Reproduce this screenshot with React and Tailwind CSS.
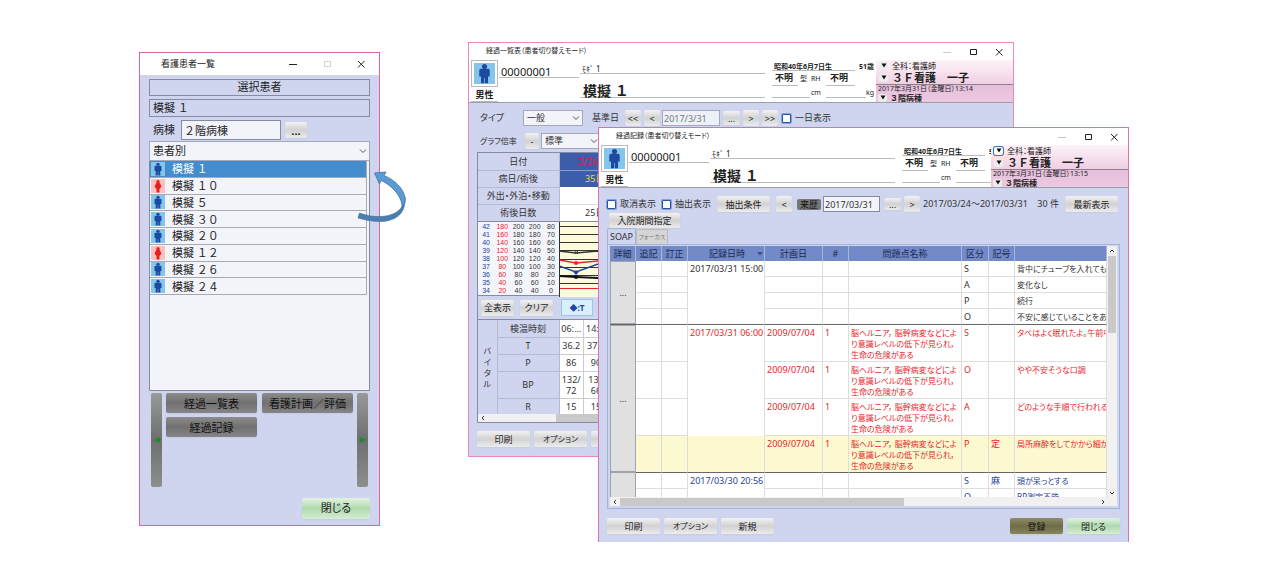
import React, { useState } from 'react';

const patients = [
  { name: '模擬 １', sex: 'm' },
  { name: '模擬 １０', sex: 'f' },
  { name: '模擬 ５', sex: 'm' },
  { name: '模擬 ３０', sex: 'm' },
  { name: '模擬 ２０', sex: 'm' },
  { name: '模擬 １２', sex: 'f' },
  { name: '模擬 ２６', sex: 'm' },
  { name: '模擬 ２４', sex: 'm' }
];

const scale = [
  [42, 180, 200, 200, 80],
  [41, 160, 180, 180, 70],
  [40, 140, 160, 160, 60],
  [39, 120, 140, 140, 50],
  [38, 100, 120, 120, 40],
  [37, 80, 100, 100, 30],
  [36, 60, 80, 80, 20],
  [35, 40, 60, 60, 10],
  [34, 20, 40, 40, 0]
];

const problem = '脳ヘルニア， 脳幹病変などによ\nり意識レベルの低下が見られ，\n生命の危険がある';

const groups = [
  {
    time: '2017/03/31 15:00',
    color: 'text-[#333]',
    rows: [
      { kind: 'S', text: '背中にチューブを入れてもら' },
      { kind: 'A', text: '変化なし' },
      { kind: 'P', text: '続行' },
      { kind: 'O', text: '不安に感じていることをあま' }
    ]
  },
  {
    time: '2017/03/31 06:00',
    color: 'text-[#e8262b]',
    rows: [
      { plan: '2009/07/04', kind: 'S', text: 'タベはよく眠れたよ。午前中' },
      { plan: '2009/07/04', kind: 'O', text: 'やや不安そうな口調' },
      { plan: '2009/07/04', kind: 'A', text: 'どのような手順で行われるの' },
      { plan: '2009/07/04', kind: 'P', mark: '定', text: '局所麻酔をしてかから細か', active: true }
    ]
  },
  {
    time: '2017/03/30 20:56',
    color: 'text-[#2b3f96]',
    rows: [
      { kind: 'S', mark: '麻', text: '頭が呆っとする' },
      { kind: 'O', text: 'BP測定不能' }
    ]
  }
];

const Person = ({ sex = 'm', className }) => (
  <svg viewBox="0 0 24 24" className={className} aria-hidden="true">
    <rect width="24" height="24" fill={sex === 'm' ? '#86c5ea' : '#fbc0c0'} />
    {sex === 'm' ? (
      <g fill="#1c4aa0">
        <circle cx="12" cy="4" r="2.900" />
        <path d="M8 6.500h8q2 0 2 2.200v6.800h-2V23h-3.600v-6h-0.800v6H8v-7.500H6V8.700q0-2.200 2-2.200z" />
      </g>
    ) : (
      <g fill="#e8201c">
        <circle cx="12" cy="4.500" r="3" />
        <path d="M9 7h6l3 6-3.500 4v6h-5v-6L6 13z" />
      </g>
    )}
  </svg>
);

const Btn = ({ className = '', children, ...rest }) => (
  <button
    type="button"
    className={`flex shrink-0 items-center justify-center whitespace-nowrap rounded-xs bg-linear-to-b from-[#f2f2f2] via-[#d2d2d2] to-[#ececec] leading-none text-[#222] shadow-xs ${className}`}
    {...rest}
  >
    {children}
  </button>
);

const Check = ({ id, label }) => (
  <div className="flex shrink-0 items-center gap-1">
    <input
      id={id}
      type="checkbox"
      className="size-[9px] appearance-none rounded-[1px] border border-[#2456a8] bg-white ring-1 ring-[#2456a8]/40 checked:bg-[#2456a8]"
    />
    <label htmlFor={id} className="whitespace-nowrap">{label}</label>
  </div>
);

const Chevron = ({ className }) => (
  <svg viewBox="0 0 8 8" className={className} fill="none" stroke="#555" strokeWidth="1" aria-hidden="true">
    <path d="M1 2.500l3 3 3-3" />
  </svg>
);

const Select = ({ label, value, className }) => (
  <div className={`grid items-center border border-[#a3a8bd] bg-[#f3f3fa] ${className}`}>
    <select aria-label={label} className="col-start-1 row-start-1 h-full w-full appearance-none pl-[3px] outline-none">
      <option>{value}</option>
    </select>
    <Chevron className="pointer-events-none col-start-1 row-start-1 mr-0.5 size-2 justify-self-end" />
  </div>
);

const TitleBar = ({
  title,
  className = 'h-[17px]',
  textClass = 'pl-[17px] text-[7px]',
  controls = 'gap-[18px] pr-2.5',
  dim
}) => (
  <div className={`flex shrink-0 items-center justify-between bg-white ${className}`}>
    <h2 className={`text-[#222] ${textClass}`}>{title}</h2>
    <div className={`flex ${controls}`}>
      <button type="button" aria-label="最小化">
        <svg viewBox="0 0 8 8" className="size-2" stroke={dim === 'min' ? '#c8c8c8' : '#222'}><path d="M0 4.500h8" /></svg>
      </button>
      <button type="button" aria-label="最大化">
        <svg viewBox="0 0 8 8" className="size-2" fill="none" stroke={dim === 'max' ? '#d0d0d0' : '#222'}><path d="M1.500 1.500h6v5h-6z" /></svg>
      </button>
      <button type="button" aria-label="ウィンドウを閉じる">
        <svg viewBox="0 0 8 8" className="size-2" stroke="#222"><path d="M1 1l6.500 6.500M7.500 1L1 7.500" /></svg>
      </button>
    </div>
  </div>
);

const MenuBtn = ({ focus }) => (
  <button
    type="button"
    aria-label="切替"
    className={`flex h-2 w-[9px] shrink-0 items-center justify-center rounded-xs ${focus ? 'bg-white ring-1 ring-[#2878c8]' : 'bg-[#ececec]'}`}
  >
    <svg viewBox="0 0 6 5" className="h-[5px] w-1.5"><path d="M0.500 0.500h5L3 4.500z" fill="#111" /></svg>
  </button>
);

const PatientHeader = ({ time, focus }) => (
  <div className="flex h-[43px] shrink-0 border-b border-[#9a9fae] bg-white text-[#222]">
    <div className="flex min-w-0 flex-1 overflow-hidden pl-0.5">
      <div className="flex w-[27px] shrink-0 flex-col">
        <div className="border border-[#bbb] bg-white p-0.5">
          <Person className="size-[21px]" />
        </div>
        <div className="mt-0.5 border-b border-[#bbb] text-center text-[9px] font-bold leading-3">男性</div>
      </div>
      <div className="ml-px h-[18px] w-20 shrink-0 border-b border-[#bbb] pl-0.5 text-[11px] leading-[23px]">00000001</div>
      <div className="ml-px w-[185px] shrink-0 [font-feature-settings:normal]">
        <div className="h-3.5 border-b border-[#bbb] pl-0.5 text-[8px] leading-[18px]">ﾓｷﾞ 1</div>
        <div className="h-6 border-b border-[#bbb] pl-[3px] text-[14px] font-bold leading-[33px]">模擬 １</div>
      </div>
      <div className="ml-[7px] w-[108px] shrink-0 text-[7px]">
        <div className="flex h-[11px] gap-1 leading-[14px]">
          <span className="w-[83px] whitespace-nowrap border-b border-[#bbb] pl-0.5 font-bold">昭和40年6月7日生</span>
          <span className="whitespace-nowrap font-bold">51歳</span>
        </div>
        <div className="flex h-[15px] items-end leading-[14px]">
          <span className="w-[26px] border-b border-[#bbb] pl-[3px] text-[9px] font-bold">不明</span>
          <span className="w-[13px] pl-0.5">型</span>
          <span className="w-[15px]">RH</span>
          <span className="w-[29px] border-b border-[#bbb] pl-1 text-[9px] font-bold">不明</span>
        </div>
        <div className="flex h-3 items-end leading-[10px]">
          <span className="h-2 w-[38px] border-b border-[#bbb]" />
          <span className="w-4 pl-px">cm</span>
          <span className="h-2 w-[40px] border-b border-[#bbb]" />
          <span>kg</span>
        </div>
      </div>
    </div>
    <div className="flex w-[137px] shrink-0 flex-col whitespace-nowrap">
      <div className="h-[25px] border-b border-[#8d7f8d] bg-linear-to-b from-[#fdf3f8] to-[#f0cfe3] pl-[3px]">
        <div className="flex h-[11px] items-center gap-1 text-[8px] leading-none"><MenuBtn focus={focus} />全科：看護師</div>
        <div className="flex h-[13px] items-center gap-1 text-[11px] font-bold leading-none [font-feature-settings:normal]"><MenuBtn />３Ｆ看護　一子</div>
      </div>
      <div className="flex-1 bg-linear-to-b from-[#e6bfdb] to-[#ecc9e0] pl-0.5">
        <div className="text-[7px] leading-[8px]">2017年3月31日（金曜日）{time}</div>
        <div className="flex h-[9px] items-center gap-[3px] text-[8px] font-bold leading-none [font-feature-settings:normal]"><MenuBtn />３階病棟</div>
      </div>
    </div>
  </div>
);

const PatientList = () => {
  const [selected, setSelected] = useState(0);

  return (
    <section className="absolute left-[139px] top-[52px] flex h-[474px] w-[241px] flex-col border border-[#e05fa8] bg-[#cfd5ee] [font-feature-settings:normal]">
      <TitleBar title="看護患者一覧" className="h-[22px]" textClass="pl-[21px] text-[9px]" controls="gap-[26px] pr-3.5" dim="max" />
      <div className="flex flex-1 flex-col px-[9px] pt-1 text-[11px] text-[#222]">
        <div className="flex h-[17px] items-center justify-center border border-[#858ba5]">選択患者</div>
        <div className="mt-[3px] flex h-[18px] items-center border border-[#858ba5] pl-[3px]">模擬 １</div>
        <div className="mt-[3px] flex h-5 items-center">
          <label htmlFor="ward" className="w-8 pl-1">病棟</label>
          <input id="ward" defaultValue="２階病棟" className="h-5 w-[100px] border border-[#858ba5] bg-[#f3f3fa] pl-0.5 outline-none" />
          <Btn className="ml-1 h-4 w-[22px] font-bold">...</Btn>
        </div>
        <Select label="表示" value="患者別" className="mt-px h-[20px]" />
        <div className="h-[230px] border border-t-0 border-[#858ba5] bg-[#f3f3fa] pr-0.5">
          <ul className="flex h-[134px] flex-col">
            {patients.map((p, i) => (
              <li key={p.name} className="min-h-0 flex-1">
                <button
                  type="button"
                  onClick={() => setSelected(i)}
                  className={`flex h-full w-full items-center gap-[7px] border-b border-r border-[#a9a9b0] pl-px leading-none ${selected === i ? 'bg-[#448ccb] text-white' : ''}`}
                >
                  <Person sex={p.sex} className="size-3.5" />
                  {p.name}
                </button>
              </li>
            ))}
          </ul>
        </div>
        <div className="mt-0.5 flex h-[94px] justify-between px-0.5">
          <button type="button" aria-label="前へ" className="flex w-[11px] items-center justify-center rounded-xs bg-linear-to-b from-[#999] via-[#6f6f6f] to-[#8e8e8e]">
            <svg viewBox="0 0 6 6" className="size-1.5"><path d="M6 0v6L0 3z" fill="#1f8a2c" /></svg>
          </button>
          <div className="grid grid-cols-2 content-start gap-x-[5px] gap-y-1">
            {['経過一覧表', '看護計画／評価', '経過記録'].map((t) => (
              <button key={t} type="button" className="h-5 w-[91px] whitespace-nowrap rounded-xs bg-linear-to-b from-[#8c8c8c] via-[#707070] to-[#868686] leading-none text-[#111] shadow-xs">
                {t}
              </button>
            ))}
          </div>
          <button type="button" aria-label="次へ" className="flex w-[11px] items-center justify-center rounded-xs bg-linear-to-b from-[#999] via-[#6f6f6f] to-[#8e8e8e]">
            <svg viewBox="0 0 6 6" className="size-1.5"><path d="M0 0v6l6-3z" fill="#1f8a2c" /></svg>
          </button>
        </div>
        <button type="button" className="mt-[11px] h-[21px] w-[68px] self-end rounded-xs bg-linear-to-b from-[#e2f3e0] via-[#afd9ae] to-[#d5eed4] text-[#222] shadow-xs [font-feature-settings:'palt']">
          閉じる
        </button>
      </div>
    </section>
  );
};

const Graph = () => (
  <svg viewBox="0 0 70 75" className="h-[75px] w-[70px]" aria-hidden="true">
    <rect width="70" height="75" fill="#fdfbdc" />
    <path d="M0 4.500h70M0 12.500h70M0 20.500h70M0 28.500h70M0 37.500h70M0 45.500h70M0 53.500h70M0 61.500h70" stroke="#333" fill="none" />
    <path d="M0 66.500h70" stroke="#e8262b" />
    <path d="M0 29l17 2 22-2 20 2" stroke="#333" strokeWidth="1.500" fill="none" />
    <path d="M15.500 29l3.500 3M19 29l-3.500 3" stroke="#333" fill="none" />
    <path d="M0 38l17 3 22-2 20-2" stroke="#e8262b" strokeWidth="1.500" fill="none" />
    <path d="M0 44l17 6 22-8 20 3" stroke="#1d44a3" strokeWidth="1.500" fill="none" />
    <path d="M0 54l17 1 22 1 20-1" stroke="#111" strokeWidth="2" fill="none" />
    <circle cx="17" cy="41" r="2" fill="#e8262b" />
    <path d="M17 48l2.500 2.500L17 53l-2.500-2.500z" fill="#1d44a3" />
    <circle cx="17" cy="55" r="2" fill="#111" />
    <path d="M0.500 0v75" stroke="#333" />
  </svg>
);

const ProgressChart = () => (
  <section className="absolute left-[468px] top-[42px] flex h-[415px] w-[546px] flex-col border border-[#ec87bd] bg-[#cfd5ee]">
    <TitleBar title="経過一覧表（患者切り替えモード）" dim="min" />
    <PatientHeader time="13:14" />
    <div className="flex flex-1 flex-col overflow-hidden px-2 text-[9px] text-[#333]">
      <div className="mt-[7px] flex h-4 shrink-0 items-center">
        <span className="w-[46px] pl-[3px]">タイプ</span>
        <Select label="タイプ" value="一般" className="h-4 w-[60px]" />
        <label htmlFor="base-date" className="w-[42px] pl-[9px]">基準日</label>
        <Btn className="h-4 w-4">&lt;&lt;</Btn>
        <Btn className="ml-[3px] h-4 w-4">&lt;</Btn>
        <input id="base-date" defaultValue="2017/3/31" className="ml-0.5 h-4 w-[58px] border border-[#a3a8bd] bg-[#eef0f8] pl-px text-[#777] outline-none" />
        <Btn className="ml-[3px] h-3.5 w-[17px]">...</Btn>
        <Btn className="ml-[3px] h-4 w-4">&gt;</Btn>
        <Btn className="ml-[3px] mr-1 h-4 w-4">&gt;&gt;</Btn>
        <Check id="one-day" label="一日表示" />
      </div>
      <div className="mt-[7px] flex h-4 shrink-0 items-center">
        <span className="w-12 whitespace-nowrap pl-[3px] text-[8px]">グラフ倍率</span>
        <Btn className="mr-0.5 h-4 w-3.5">-</Btn>
        <Select label="グラフ倍率" value="標準" className="h-4 w-[60px]" />
      </div>
      <div className="mt-[3px] h-[271px] overflow-hidden border border-[#858ba5]">
        <table className="w-[152px] table-fixed border-collapse text-center leading-none">
          <tbody>
            <tr className="h-[17px]">
              <th className="w-[81px] border-b border-r border-[#b5bbd2] font-normal">日付</th>
              <td className="border-b border-[#8d9bc9] bg-[#3c5da9] text-[#e0203c]">3/26(日)</td>
            </tr>
            <tr className="h-[17px]">
              <th className="border-b border-r border-[#b5bbd2] font-normal">病日/術後</th>
              <td className="bg-[#3c5da9] text-[#efd659]">35日</td>
            </tr>
            <tr className="h-[17px]">
              <th className="border-b border-r border-[#b5bbd2] font-normal">外出・外泊・移動</th>
              <td className="border-b border-[#ddd] bg-white" />
            </tr>
            <tr className="h-[17px]">
              <th className="border-r border-[#b5bbd2] font-normal">術後日数</th>
              <td className="bg-white">25日</td>
            </tr>
          </tbody>
        </table>
        <div className="flex h-[75px] border-y border-[#858ba5]">
          <div className="w-[81px] shrink-0 bg-[#f4f5fb]">
            {scale.map(([t, p, a, b, r]) => (
              <div key={t} className="grid h-2 grid-cols-5 text-center font-['Liberation_Sans',sans-serif] text-[7px] leading-[9px]">
                <span className="text-[#1d44a3]">{t}</span>
                <span className="text-[#e8262b]">{p}</span>
                <span>{a}</span>
                <span>{b}</span>
                <span>{r}</span>
              </div>
            ))}
          </div>
          <Graph />
        </div>
        <div className="flex h-6 items-center border-b border-[#858ba5] pl-[3px]">
          <Btn className="h-4 w-[33px]">全表示</Btn>
          <Btn className="ml-1.5 h-4 w-[33px]">クリア</Btn>
          <button type="button" className="ml-2 h-[17px] w-8 border border-[#9fc4e4] bg-[#d9effb] text-[8px] font-bold leading-none text-[#1d44a3]">◆:T</button>
        </div>
        <table className="w-[130px] table-fixed border-collapse text-center leading-[11px]">
          <tbody>
            <tr className="h-[17px]">
              <th rowSpan={5} className="w-[19px] border-r border-[#b5bbd2] px-1 text-[8px] font-normal">バイタル</th>
              <th className="w-[62px] border-b border-r border-[#b5bbd2] font-normal">検温時刻</th>
              <td className="border-b border-r border-[#ccc] bg-white">06:...</td>
              <td className="border-b border-[#ccc] bg-white">14:...</td>
            </tr>
            <tr className="h-[17px]">
              <th className="border-b border-r border-[#b5bbd2] font-normal">T</th>
              <td className="border-b border-r border-[#ccc] bg-white">36.2</td>
              <td className="border-b border-[#ccc] bg-white">37.2</td>
            </tr>
            <tr className="h-[17px]">
              <th className="border-b border-r border-[#b5bbd2] font-normal">P</th>
              <td className="border-b border-r border-[#ccc] bg-white">86</td>
              <td className="border-b border-[#ccc] bg-white">90</td>
            </tr>
            <tr className="h-[27px]">
              <th className="border-b border-r border-[#b5bbd2] font-normal">BP</th>
              <td className="border-b border-r border-[#ccc] bg-white">132/<br />72</td>
              <td className="border-b border-[#ccc] bg-white">136<br />66</td>
            </tr>
            <tr className="h-4">
              <th className="border-r border-[#b5bbd2] font-normal">R</th>
              <td className="border-r border-[#ccc] bg-white">15</td>
              <td className="bg-white">15</td>
            </tr>
          </tbody>
        </table>
        <div className="flex h-2 items-center bg-[#f1f1f1]">
          <svg viewBox="0 0 8 8" className="ml-px size-2" fill="none" stroke="#333"><path d="M5 2L3 4l2 2" /></svg>
          <div className="ml-[69px] h-2 flex-1 bg-[#c9c9c9]" />
        </div>
      </div>
      <div className="mt-2 flex gap-1">
        <Btn className="h-4 w-[53px]">印刷</Btn>
        <Btn className="h-4 w-[53px] text-[8px]">オプション</Btn>
        <Btn className="h-4 w-[53px]" aria-label="新規" />
      </div>
    </div>
  </section>
);

const columns = [
  { label: '詳細', width: 'w-[26px]' },
  { label: '追記', width: 'w-[26px]' },
  { label: '訂正', width: 'w-[26px]' },
  { label: '記録日時', width: 'w-[77px]', sort: true },
  { label: '計画日', width: 'w-[58px]' },
  { label: '#', width: 'w-[26px]' },
  { label: '問題点名称', width: 'w-[113px]' },
  { label: '区分', width: 'w-[27px]' },
  { label: '記号', width: 'w-[26px]' },
  { label: '', width: 'w-[92px]' }
];

const RecordTable = () => (
  <table className="w-full table-fixed border-separate border-spacing-0 bg-white text-[9px]">
    <thead>
      <tr className="h-[15px] bg-[#728ac8] text-[#1c2950]">
        {columns.map((c) => (
          <th key={c.label} className={`border-r border-[#a9b6dc] p-0 font-normal leading-none ${c.width}`}>
            {c.sort ? (
              <div className="flex items-center pl-[21px]">
                {c.label}
                <svg viewBox="0 0 6 4" className="ml-auto mr-px h-1 w-1.5"><path d="M0 0h6L3 3.500z" fill="#3b4f8c" /></svg>
              </div>
            ) : c.label}
          </th>
        ))}
      </tr>
    </thead>
    {groups.map((g) => (
      <tbody key={g.time} className={g.color}>
        {g.rows.map((r, i) => {
          const line = i === g.rows.length - 1 ? 'border-b border-b-[#666]' : 'border-b border-b-[#ddd]';
          const cell = `border-r border-r-[#ddd] p-0 pl-0.5 pt-px align-top leading-[13px] ${line}`;
          return (
            <tr key={r.kind} className={`${r.plan ? 'h-[37px]' : 'h-4'} ${r.active ? 'bg-[#fcf8d0]' : ''}`}>
              {i === 0 && (
                <td rowSpan={g.rows.length} className="h-px border-b border-[#666] p-0">
                  <button type="button" aria-label="詳細" className="h-full w-full border border-[#a0a3ad] bg-[#e0e0e0] text-[#333]">
                    {g.rows.length > 2 ? '...' : ''}
                  </button>
                </td>
              )}
              <td className={cell} />
              <td className={cell} />
              <td className={`whitespace-nowrap border-r border-r-[#ddd] p-0 pl-0.5 pt-px align-top leading-[13px] ${i === g.rows.length - 1 ? 'border-b border-b-[#666]' : ''}`}>
                {i === 0 && g.time}
              </td>
              <td className={cell}>{r.plan}</td>
              <td className={cell}>{r.plan && '1'}</td>
              <td className={`whitespace-pre border-r border-r-[#ddd] p-0 pl-0.5 pt-0.5 align-top text-[8px] leading-[11px] ${line}`}>{r.plan && problem}</td>
              <td className={cell}>{r.kind}</td>
              <td className={cell}>{r.mark}</td>
              <td className={`overflow-hidden whitespace-nowrap text-[8px] ${cell}`}>{r.text}</td>
            </tr>
          );
        })}
      </tbody>
    ))}
  </table>
);

const ProgressRecord = () => (
  <section className="absolute left-[598px] top-[127px] flex h-[415px] w-[531px] flex-col border border-b-0 border-[#d873b0] bg-[#cfd5ee]">
    <TitleBar title="経過記録（患者切り替えモード）" dim="min" />
    <PatientHeader time="13:15" focus />
    <div className="flex flex-1 flex-col px-2 text-[9px] text-[#333]">
      <div className="mt-2 flex h-4 items-center">
        <Check id="cancelled" label="取消表示" />
        <div className="ml-1.5"><Check id="extracted" label="抽出表示" /></div>
        <Btn className="ml-1.5 h-4 w-[53px]">抽出条件</Btn>
        <Btn className="ml-1.5 h-4 w-4">&lt;</Btn>
        <button type="button" className="ml-[5px] h-[11px] w-6 shrink-0 rounded-xs bg-[#777] leading-none text-[#111]">来歴</button>
        <input aria-label="記録日" defaultValue="2017/03/31" className="ml-0.5 h-4 w-[57px] border border-[#858ba5] bg-[#f3f3fa] pl-px outline-none" />
        <Btn className="ml-1 h-3 w-[17px]">...</Btn>
        <Btn className="ml-[3px] h-4 w-4">&gt;</Btn>
        <span className="ml-[3px] whitespace-nowrap">2017/03/24～2017/03/31</span>
        <span className="ml-auto mr-1.5 whitespace-nowrap">30 件</span>
        <Btn className="mr-0.5 h-4 w-[53px]">最新表示</Btn>
      </div>
      <Btn className="ml-0.5 mt-px h-[15px] w-[71px]">入院期間指定</Btn>
      <div className="flex h-4 items-end" role="tablist">
        <button type="button" role="tab" aria-selected="true" className="h-4 w-[29px] rounded-t-xs border border-b-0 border-[#a3b4da] leading-none">SOAP</button>
        <button type="button" role="tab" aria-selected="false" className="h-[15px] w-8 whitespace-nowrap rounded-t-xs border border-b-0 border-[#bbb] bg-[#d5d5d5] text-[6px] leading-none text-[#777]">フォーカス</button>
      </div>
      <div className="border border-[#a3b4da] p-0.5 pt-px">
        <div className="flex h-[251px]">
          <div className="min-w-0 flex-1 overflow-hidden">
            <RecordTable />
          </div>
          <div className="flex w-2.5 flex-col items-center bg-[#f1f1f1]">
            <svg viewBox="0 0 8 8" className="my-px size-2 shrink-0" fill="none" stroke="#333"><path d="M2 5l2-2 2 2" /></svg>
            <div className="h-[77px] w-2 bg-[#c9c9c9]" />
            <svg viewBox="0 0 8 8" className="mt-auto size-2 shrink-0" fill="none" stroke="#333"><path d="M2 3l2 2 2-2" /></svg>
          </div>
        </div>
        <div className="flex h-[9px] items-center bg-[#f1f1f1] pr-2.5">
          <svg viewBox="0 0 8 8" className="mx-px size-2 shrink-0" fill="none" stroke="#333"><path d="M5 2L3 4l2 2" /></svg>
          <div className="h-2 w-[284px] bg-[#c9c9c9]" />
          <svg viewBox="0 0 8 8" className="ml-auto size-2 shrink-0" fill="none" stroke="#333"><path d="M3 2l2 2-2 2" /></svg>
        </div>
      </div>
      <div className="mt-[9px] flex gap-1">
        <Btn className="h-4 w-[53px]">印刷</Btn>
        <Btn className="h-4 w-[53px] text-[8px]">オプション</Btn>
        <Btn className="h-4 w-[53px]">新規</Btn>
        <button type="button" className="ml-auto h-4 w-[53px] rounded-xs bg-linear-to-b from-[#8f8d68] via-[#6f6d47] to-[#87855d] leading-none text-[#111] shadow-xs">登録</button>
        <button type="button" className="h-4 w-[53px] rounded-xs bg-linear-to-b from-[#e2f3e0] via-[#afd9ae] to-[#d5eed4] leading-none text-[#222] shadow-xs">閉じる</button>
      </div>
    </div>
  </section>
);

const App = () => (
  <main className="relative min-h-screen overflow-hidden bg-white font-['Noto_Sans','Noto_Sans_CJK_JP',sans-serif] [font-feature-settings:'palt']">
    <PatientList />
    <ProgressChart />
    <ProgressRecord />
    {/* swap arrow over the patient list */}
    <svg viewBox="0 0 50 54" className="pointer-events-none absolute left-[357px] top-[170px] h-[54px] w-[50px]" aria-hidden="true">
      <path d="M48 27C49 43 40 50 26 51.500C17 52 8 50 1 48L2.500 43C15 48 30 47.500 38 43C44 39.500 47 35 48 27z" fill="#4a7eae" stroke="#41719c" strokeWidth="0.600" />
      <path d="M17.500 3L29 2L27 5.500C40 11 49 21 48 32L45 38C46 28 36 16 24 10.500L22.500 14z" fill="#5b9bd5" stroke="#41719c" strokeWidth="0.800" />
    </svg>
  </main>
);

export default App;
